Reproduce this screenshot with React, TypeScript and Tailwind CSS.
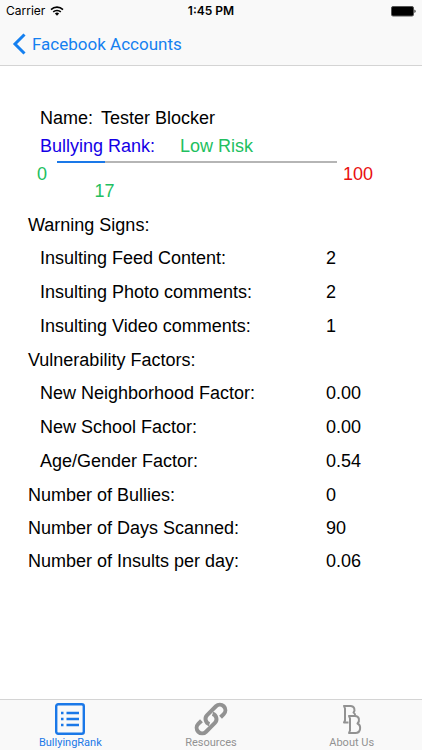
import React from "react";

const rows = [
  { label: "Warning Signs:" },
  { label: "Insulting Feed Content:", value: "2", nested: true },
  { label: "Insulting Photo comments:", value: "2", nested: true },
  { label: "Insulting Video comments:", value: "1", nested: true },
  { label: "Vulnerability Factors:" },
  { label: "New Neighborhood Factor:", value: "0.00", nested: true },
  { label: "New School Factor:", value: "0.00", nested: true },
  { label: "Age/Gender Factor:", value: "0.54", nested: true },
  { label: "Number of Bullies:", value: "0" },
  { label: "Number of Days Scanned:", value: "90" },
  { label: "Number of Insults per day:", value: "0.06" },
];

function StatusBar() {
  return (
    <div className="grid h-[22px] grid-cols-3 items-center px-[6px] text-[12px] leading-[16px] text-black">
      <div className="flex items-center gap-[5px]">
        <span>Carrier</span>
        <svg width="14" height="10" viewBox="0 0 14 10" aria-hidden="true">
          <path d="M1 3.6a8.6 8.6 0 0 1 12 0" fill="none" stroke="#000" strokeWidth="1.6" />
          <path d="M3.2 5.9a5.5 5.5 0 0 1 7.6 0" fill="none" stroke="#000" strokeWidth="1.5" />
          <path d="M4.9 7.6a3 3 0 0 1 4.2 0L7 9.8z" fill="#000" />
        </svg>
      </div>
      <span className="text-center font-semibold">1:45 PM</span>
      <svg className="justify-self-end" width="26" height="11" viewBox="0 0 26 11" aria-hidden="true">
        <rect x="1.5" y="0.5" width="22" height="9.5" rx="1.5" fill="#000" stroke="#555" />
        <path d="M24.5 3.5c1.4.5 1.4 2.9 0 3.4z" fill="#000" />
      </svg>
    </div>
  );
}

function ListIcon() {
  return (
    <svg width="30" height="32" viewBox="0 0 30 32" fill="none" stroke="currentColor" aria-hidden="true">
      <rect x="1.2" y="1.2" width="27.6" height="29.6" rx="2" strokeWidth="2.4" />
      <path d="M11.5 10H24M11.5 16H24M11.5 22H24M6 10h2.5M6 16h2.5M6 22h2.5" strokeWidth="2.4" />
    </svg>
  );
}

function LinkIcon() {
  return (
    <svg width="34" height="34" viewBox="-17 -17 34 34" fill="none" stroke="currentColor" strokeWidth="4" aria-hidden="true">
      <g transform="rotate(-45)">
        <path d="M8 5.5H12.5A5.5 5.5 0 0 0 12.5 -5.5H0A5.5 5.5 0 0 0 -4.8 2.6" />
        <path d="M-8 -5.5H-12.5A5.5 5.5 0 0 0 -12.5 5.5H0A5.5 5.5 0 0 0 4.8 -2.6" />
      </g>
    </svg>
  );
}

function LogoIcon() {
  return (
    <svg width="22" height="32" viewBox="0 0 22 32" fill="none" stroke="currentColor" strokeWidth="2" strokeLinejoin="round" aria-hidden="true">
      <path d="M7.5 19.5H3L4 17.5V5.500L3 3H9.5C13.5 3 14.500 7 12.500 9.500C13.8 10.300 14.2 11.500 14.2 12.500" />
      <path d="M8 13H14C18.5 13 19 18 16.500 20.500C20.500 22.500 20 30 14.500 30H8L9 27.500V15.500Z" />
    </svg>
  );
}

const tabs = [
  { label: "BullyingRank", Icon: ListIcon, active: true },
  { label: "Resources", Icon: LinkIcon, active: false },
  { label: "About Us", Icon: LogoIcon, active: false },
];

export default function App() {
  const rank = 17;
  return (
    <div className="flex min-h-screen flex-col bg-white font-['Liberation_Sans',Arial,sans-serif] text-[18px] text-black">
      <header className="border-b border-[#d4d4d4] bg-[#f9f9f9] font-[Inter,sans-serif]">
        <StatusBar />
        <nav className="flex h-[43px] items-center px-3">
          <button
            type="button"
            className="flex items-center gap-[6px] font-[Roboto,sans-serif] text-[17px] leading-[22px] text-[#1580f0]"
          >
            <svg width="14" height="22" viewBox="0 0 14 22" fill="none" aria-hidden="true">
              <path d="M12.5 1.5L3 11L12.5 20.5" stroke="currentColor" strokeWidth="3" />
            </svg>
            Facebook Accounts
          </button>
        </nav>
      </header>

      <main className="flex-1 px-7 pt-[38px]">
        <div className="px-3 leading-[28px]">
          <div className="flex gap-2">
            <span>Name:</span>
            <span>Tester Blocker</span>
          </div>
          <div className="flex">
            <span className="w-[140px] text-[#1400e6]">Bullying Rank:</span>
            <span className="text-[#22bf60]">Low Risk</span>
          </div>
        </div>

        <div className="flex items-start pt-px pr-[21px] pl-[9px] leading-[20px]">
          <span className="w-5 pt-[3px] text-[#22bf60]">0</span>
          <div className="flex-1">
            <progress
              aria-label="Bullying rank"
              value={rank}
              max={100}
              className="block h-[2px] w-full appearance-none bg-[#b5b5b5] [&::-webkit-progress-bar]:bg-[#b5b5b5] [&::-webkit-progress-value]:bg-[#1a78e8]"
            />
            <div className="flex pt-[18px] text-[#22bf60]">
              <span className="flex justify-end" style={{ width: `${rank}%` }}>
                <span className="translate-x-1/2">{rank}</span>
              </span>
            </div>
          </div>
          <span className="pt-[3px] pl-[6px] text-[#e81010]">100</span>
        </div>

        <table className="mt-[7px] w-full border-collapse text-left leading-[22px]">
          <tbody>
            {rows.map(({ label, value, nested }) => (
              <tr key={label} className={nested ? "h-[34px]" : "h-[33px]"}>
                <th scope="row" className={nested ? "p-0 pl-3 font-normal" : "p-0 font-normal"}>
                  {label}
                </th>
                <td className="w-[68px] p-0">{value}</td>
              </tr>
            ))}
          </tbody>
        </table>
      </main>

      <nav className="grid grid-cols-3 border-t border-[#d4d4d4] bg-[#f9f9f9] font-[Roboto,sans-serif]">
        {tabs.map(({ label, Icon, active }) => (
          <button
            key={label}
            type="button"
            aria-current={active ? "page" : undefined}
            className={
              active
                ? "flex flex-col items-center pt-[2px] text-[11px] leading-[14px] text-[#1a78e8]"
                : "flex flex-col items-center pt-[2px] text-[11px] leading-[14px] text-[#929292]"
            }
          >
            <span className="flex h-[34px] items-center">
              <Icon />
            </span>
            {label}
          </button>
        ))}
      </nav>
    </div>
  );
}
